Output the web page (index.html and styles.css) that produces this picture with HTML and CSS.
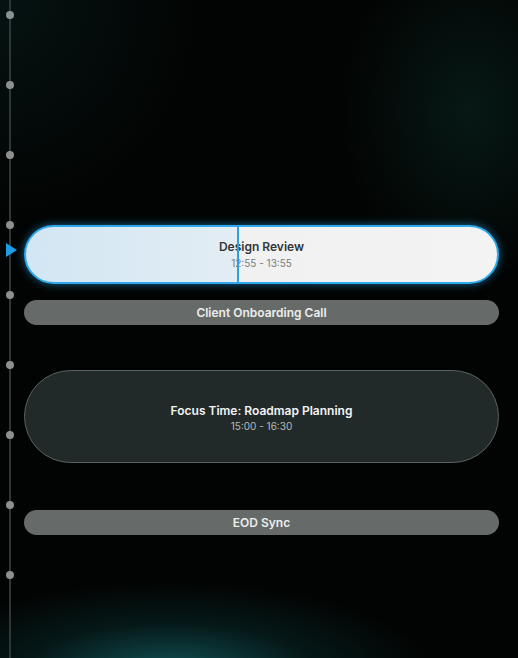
FILE: index.html
```html
<!DOCTYPE html>
<html lang="en">
<head>
<meta charset="utf-8">
<title>Timeline</title>
<link rel="stylesheet" href="styles.css">
</head>
<body>
<div class="app">
  <div class="rail">
    <span class="dot"></span>
    <span class="dot"></span>
    <span class="dot"></span>
    <span class="dot"></span>
    <span class="dot"></span>
    <span class="dot"></span>
    <span class="dot"></span>
    <span class="dot"></span>
    <span class="dot"></span>
    <span class="now-marker"></span>
  </div>
  <div class="events">
    <div class="event event-current">
      <span class="now-line"></span>
      <div class="event-title">Design Review</div>
      <div class="event-time">12:55 - 13:55</div>
    </div>
    <div class="event event-short gap-1">
      <div class="event-title">Client Onboarding Call</div>
    </div>
    <div class="event event-long gap-2">
      <div class="event-title">Focus Time: Roadmap Planning</div>
      <div class="event-time">15:00 - 16:30</div>
    </div>
    <div class="event event-short gap-3">
      <div class="event-title">EOD Sync</div>
    </div>
  </div>
</div>
</body>
</html>
```
FILE: styles.css
```css
html, body {
  margin: 0;
  padding: 0;
}
body {
  width: 518px;
  height: 658px;
  overflow: hidden;
  background: #020403;
  font-family: Inter, "Noto Sans", sans-serif;
}
.app {
  width: 518px;
  height: 658px;
  display: flex;
  gap: 4px;
  background:
    radial-gradient(ellipse 260px 90px at 170px 672px, rgba(18, 90, 94, 0.9), rgba(12, 60, 62, 0.35) 55%, rgba(0, 0, 0, 0) 100%),
    radial-gradient(ellipse 130px 170px at 470px 110px, rgba(10, 38, 34, 0.6), rgba(0, 0, 0, 0) 100%),
    radial-gradient(ellipse 200px 220px at 0px 0px, rgba(8, 28, 28, 0.6), rgba(0, 0, 0, 0) 100%),
    #020403;
}
.rail {
  position: relative;
  width: 20px;
  flex: none;
  display: flex;
  flex-direction: column;
  align-items: center;
  gap: 62px;
  padding-top: 11px;
  background: linear-gradient(90deg, transparent 9px, #2e3737 9px, #2e3737 11px, transparent 11px);
}
.dot {
  width: 8px;
  height: 8px;
  border-radius: 50%;
  background: #8a9190;
  flex: none;
}
.now-marker {
  position: absolute;
  left: 6px;
  top: 243px;
  width: 0;
  height: 0;
  border-top: 7px solid transparent;
  border-bottom: 7px solid transparent;
  border-left: 11px solid #1f9ce6;
}
.events {
  width: 475px;
  flex: none;
  display: flex;
  flex-direction: column;
  padding-top: 225px;
}
.event {
  box-sizing: border-box;
  display: flex;
  flex-direction: column;
  align-items: center;
  justify-content: center;
  border-radius: 60px;
  position: relative;
}
.event-title {
  font-size: 12px;
  font-weight: 600;
  line-height: 15px;
}
.event-time {
  font-size: 10px;
  line-height: 13px;
  margin-top: 2px;
}
.event-current {
  height: 59px;
  border: 2px solid #2ea8ea;
  box-shadow: 0 0 8px rgba(40, 165, 240, 0.6);
  background: linear-gradient(90deg, #d2e6f3 0%, #e3edf3 44.8%, #f1f1f2 44.8%, #f3f3f3 100%);
  overflow: hidden;
}
.event-current .event-title {
  color: #333536;
}
.event-current .event-time {
  color: #787b7c;
  margin-top: 3px;
}
.now-line {
  position: absolute;
  left: 44.8%;
  top: 0;
  bottom: 0;
  width: 2px;
  background: #2aa0e2;
}
.event-short {
  height: 25px;
  background: #666b69;
}
.event-short .event-title {
  color: #eceeed;
}
.event-long {
  height: 93px;
  background: #222a29;
  border: 1px solid #58625f;
}
.event-long .event-title {
  color: #f2f4f3;
  margin-top: 3px;
}
.event-long .event-time {
  color: #b5bab8;
}
.gap-1 { margin-top: 16px; }
.gap-2 { margin-top: 45px; }
.gap-3 { margin-top: 47px; }
```
